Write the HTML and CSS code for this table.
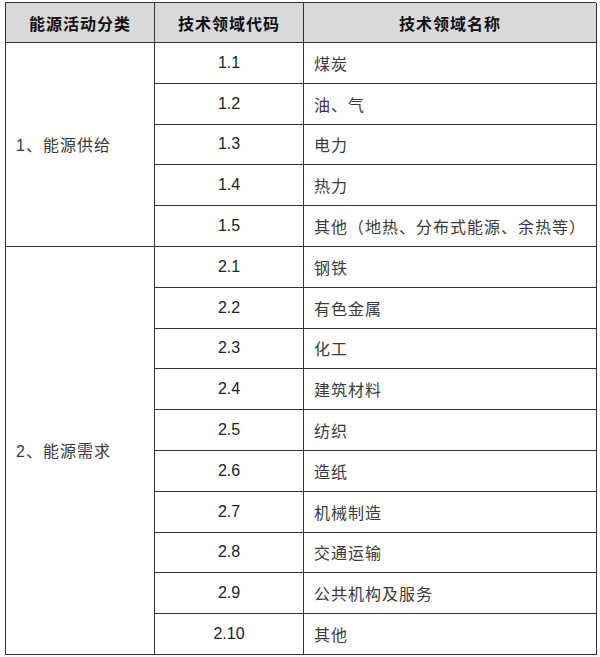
FILE: index.html
```html
<!DOCTYPE html>
<html lang="zh">
<head>
<meta charset="utf-8">
<link rel="stylesheet" href="styles.css">
</head>
<body>
<div class="tbl">
  <div class="cell head">能源活动分类</div>
  <div class="cell head">技术领域代码</div>
  <div class="cell head">技术领域名称</div>

  <div class="cell cat cat1">1、能源供给</div>
  <div class="cell code">1.1</div><div class="cell name">煤炭</div>
  <div class="cell code">1.2</div><div class="cell name">油、气</div>
  <div class="cell code">1.3</div><div class="cell name">电力</div>
  <div class="cell code">1.4</div><div class="cell name">热力</div>
  <div class="cell code">1.5</div><div class="cell name">其他（地热、分布式能源、余热等）</div>

  <div class="cell cat cat2">2、能源需求</div>
  <div class="cell code">2.1</div><div class="cell name">钢铁</div>
  <div class="cell code">2.2</div><div class="cell name">有色金属</div>
  <div class="cell code">2.3</div><div class="cell name">化工</div>
  <div class="cell code">2.4</div><div class="cell name">建筑材料</div>
  <div class="cell code">2.5</div><div class="cell name">纺织</div>
  <div class="cell code">2.6</div><div class="cell name">造纸</div>
  <div class="cell code">2.7</div><div class="cell name">机械制造</div>
  <div class="cell code">2.8</div><div class="cell name">交通运输</div>
  <div class="cell code">2.9</div><div class="cell name">公共机构及服务</div>
  <div class="cell code">2.10</div><div class="cell name">其他</div>
</div>
</body>
</html>
```
FILE: styles.css
```css
html, body {
  margin: 0;
  padding: 0;
  background: #fff;
}
.tbl {
  margin: 2px 0 0 5px;
  width: 591px;
  box-sizing: border-box;
  display: grid;
  grid-template-columns: 149px 149px 293px;
  grid-template-rows: 40px repeat(15, 40.8px);
  border-top: 1.5px solid #333;
  border-left: 1.5px solid #333;
  font-family: "Liberation Sans", "Noto Sans CJK SC", sans-serif;
  font-size: 16px;
  color: #3a3a3a;
}
.cell {
  box-sizing: border-box;
  border-right: 1.5px solid #333;
  border-bottom: 1.5px solid #333;
  display: flex;
  align-items: center;
  letter-spacing: 1px;
}
.head {
  background: #d9d9d9;
  justify-content: center;
  font-weight: bold;
  color: #111;
}
.cat {
  grid-column: 1;
  padding-left: 10px;
}
.cat1 { grid-row: 2 / span 5; }
.cat2 { grid-row: 7 / span 10; }
.code {
  grid-column: 2;
  justify-content: center;
  letter-spacing: 0;
  color: #222;
}
.name {
  grid-column: 3;
  padding-left: 10px;
}
```
